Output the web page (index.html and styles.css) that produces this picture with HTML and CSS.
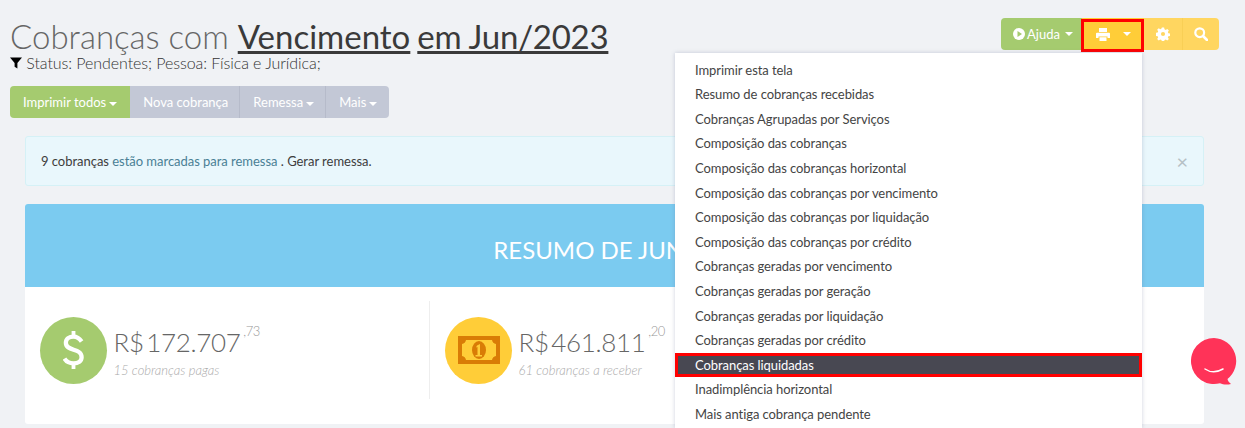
FILE: index.html
```html
<!DOCTYPE html>
<html lang="pt-BR">

<head>
    <meta charset="UTF-8">
    <title>Cobranças</title>
    <link rel="stylesheet" href="styles.css">
</head>

<body>
    <div class="page">
        <div class="top">
            <div class="heading">
                <h1>Cobranças com <u>Vencimento</u> <u>em Jun/2023</u></h1>
                <p class="filter">
                    <svg class="filter-icon" viewBox="0 0 12 12"><path d="M0 .5h12L7.4 6v5.6L4.6 9.8V6z"/></svg>
                    Status: Pendentes; Pessoa: Física e Jurídica;
                </p>
            </div>
            <div class="tools">
                <button class="btn green help">
                    <svg class="play" viewBox="0 0 12 12"><circle cx="6" cy="6" r="6" fill="#fff"/><path d="M4.5 3l4.5 3-4.5 3z" fill="#a5cb6f"/></svg>
                    Ajuda<span class="caret"></span>
                </button>
                <button class="btn yellow print">
                    <svg class="ico-print" viewBox="0 0 14 13"><path d="M3 0h8v4H3zM1 4.800h12a1 1 0 0 1 1 1V10h-2.500V8.500h-9V10H0V5.800a1 1 0 0 1 1-1zM3.500 9.300h7V13h-7z" fill="#fff"/></svg>
                    <span class="caret"></span>
                </button>
                <button class="btn pale gear">
                    <svg class="ico" viewBox="0 0 14 14"><path fill="#fff" fill-rule="evenodd" d="M5.800 0h2.400l.4 2 1.300.6 1.700-1.100 1.700 1.700-1.100 1.700.5 1.300 2 .4v2.400l-2 .4-.5 1.300 1.100 1.700-1.700 1.700-1.700-1.100-1.300.5-.4 2H5.800l-.4-2-1.300-.5-1.700 1.100-1.700-1.700 1.100-1.700-.5-1.300-2-.4V5.800l2-.4.500-1.300-1.100-1.700 1.700-1.700 1.700 1.100 1.300-.6zM7 4.800a2.200 2.200 0 1 0 0 4.400 2.200 2.200 0 0 0 0-4.400z" transform="translate(.5 .5) scale(.93)"/></svg>
                </button>
                <button class="btn pale last">
                    <svg class="ico" viewBox="0 0 14 14"><circle cx="5.700" cy="5.700" r="4.400" fill="none" stroke="#fff" stroke-width="2.200"/><path d="M9 9l4 4" stroke="#fff" stroke-width="2.600" stroke-linecap="round"/></svg>
                </button>
            </div>
        </div>

        <div class="actions">
            <button class="act act-green">Imprimir todos<span class="caret"></span></button>
            <button class="act">Nova cobrança</button>
            <button class="act">Remessa<span class="caret"></span></button>
            <button class="act">Mais<span class="caret"></span></button>
        </div>

        <div class="alert">
            <span>9 cobranças <a>estão marcadas para remessa</a> . Gerar remessa.</span>
            <span class="close">×</span>
        </div>

        <div class="card">
            <div class="card-head">RESUMO DE JUNHO</div>
            <div class="stats">
                <div class="stat">
                    <div class="circle c-green">
                        <svg class="dollar" viewBox="0 0 22 40"><path d="M11 0v7M11 33v7" stroke="#fff" stroke-width="4"/><path d="M19.500 11C17 7.500 14 6 11 6 6.500 6 3 8.500 3 12.500c0 9.500 16.500 5 16.500 15 0 4-3.500 6.500-8.500 6.500-4 0-7.500-1.500-9.500-5" fill="none" stroke="#fff" stroke-width="4.500"/></svg>
                    </div>
                    <div class="stat-text">
                        <div class="value">R$ 172.707 <sup>,73</sup></div>
                        <div class="note">15 cobranças pagas</div>
                    </div>
                </div>
                <div class="stat divided">
                    <div class="circle c-yellow">
                        <svg class="bill" viewBox="0 0 42 28"><path fill="#d97c06" fill-rule="evenodd" d="M0 0h42v28H0zM8 4a5 5 0 0 1-4 4v12a5 5 0 0 1 4 4h26a5 5 0 0 1 4-4V8a5 5 0 0 1-4-4z"/><ellipse cx="21" cy="14" rx="7" ry="9" fill="#d97c06"/><path d="M19 9.500l3-1.500v11h2v1.500h-6.500V19h2v-8l-1.500.5z" fill="#ffcd38"/></svg>
                    </div>
                    <div class="stat-text">
                        <div class="value">R$ 461.811 <sup>,20</sup></div>
                        <div class="note">61 cobranças a receber</div>
                    </div>
                </div>
            </div>
        </div>
    </div>

    <ul class="menu">
        <li>Imprimir esta tela</li>
        <li>Resumo de cobranças recebidas</li>
        <li>Cobranças Agrupadas por Serviços</li>
        <li>Composição das cobranças</li>
        <li>Composição das cobranças horizontal</li>
        <li>Composição das cobranças por vencimento</li>
        <li>Composição das cobranças por liquidação</li>
        <li>Composição das cobranças por crédito</li>
        <li>Cobranças geradas por vencimento</li>
        <li>Cobranças geradas por geração</li>
        <li>Cobranças geradas por liquidação</li>
        <li>Cobranças geradas por crédito</li>
        <li class="active">Cobranças liquidadas</li>
        <li>Inadimplência horizontal</li>
        <li>Mais antiga cobrança pendente</li>
    </ul>

    <svg class="chat" viewBox="0 0 46 47"><path fill="#ff3358" d="M23 0a23 23 0 1 0 6 45.200c3 1.500 7 1.800 11 .8-2-1.500-3-3-3.500-5A23 23 0 0 0 23 0z"/><path d="M14 31c5 3.500 12 3.500 18 0" fill="none" stroke="#fff" stroke-width="1.500" stroke-linecap="round"/></svg>
</body>

</html>
```
FILE: styles.css
```css
*,
::before,
::after {
    box-sizing: border-box;
    margin: 0;
    padding: 0;
}

html,
body {
    height: 428px;
    overflow: hidden;
}

body {
    background: #f0f2f5;
    font-family: Lato, sans-serif;
    font-size: 13px;
    color: #444;
}

button {
    font-family: inherit;
    border: 0;
    color: #fff;
}

.page {
    padding: 18px 26px 0 10px;
}

.top {
    display: flex;
    justify-content: space-between;
    align-items: flex-start;
}

h1 {
    font-size: 33px;
    font-weight: 300;
    line-height: 36px;
    color: #666;
    white-space: nowrap;
}

h1 u {
    color: #3a3a3a;
    font-weight: 400;
}

h1 u + u {
    margin-left: -2px;
    letter-spacing: -.25px;
}

.filter {
    font-size: 16px;
    font-weight: 300;
    line-height: 18px;
    letter-spacing: -.07px;
    color: #333;
}

.filter-icon {
    width: 12px;
    height: 12px;
}

.tools {
    display: flex;
}

.btn {
    height: 32px;
    font-size: 13px;
    display: flex;
    align-items: center;
    justify-content: center;
}

.green {
    width: 81px;
    padding-left: 3px;
    background: #a5cb6f;
    border-radius: 4px 0 0 4px;
    gap: 2px;
}

.play {
    width: 12px;
    height: 12px;
}

.yellow {
    position: relative;
    width: 62px;
    background: #ffcd38;
    gap: 10px;
}

/* marcacao vermelha do print */
.yellow::after {
    content: "";
    position: absolute;
    top: 1px;
    left: -1px;
    right: 0;
    bottom: -2px;
    border: 3px solid #f00;
}

.ico-print {
    width: 14px;
    height: 13px;
}

.pale {
    width: 37px;
    background: #ffd660;
}

.gear {
    width: 38px;
}

.pale + .pale {
    border-left: 1px solid #f9cf55;
}

.last {
    border-radius: 0 4px 4px 0;
}

.ico {
    width: 14px;
    height: 14px;
}

.caret {
    display: inline-block;
    margin-left: 3px;
    vertical-align: middle;
    border-top: 4px solid #fff;
    border-left: 4px solid transparent;
    border-right: 4px solid transparent;
}

.actions {
    display: flex;
    margin-top: 14px;
    height: 32px;
    width: max-content;
}

.act {
    background: #c3c8d6;
    font-size: 13px;
    padding: 0 11px 0 13px;
    border-right: 1px solid #b6bbca;
}

.act:last-child {
    padding-right: 12px;
    border-right: 0;
    border-radius: 0 4px 4px 0;
}

.act-green {
    background: #a5cb6f;
    padding-right: 13px;
    border-right: 0;
    border-radius: 4px 0 0 4px;
}

.alert {
    display: flex;
    justify-content: space-between;
    align-items: center;
    margin: 18px 15px 0;
    height: 50px;
    padding: 0 15px;
    background: #e9f7fc;
    border: 1px solid #d5f1f6;
    border-radius: 3px;
    letter-spacing: -.03px;
    color: #3d3d3d;
}

.alert a {
    color: #4a7f95;
}

.close {
    font-size: 20px;
    color: #b5c0c5;
}

.card {
    margin: 18px 15px 0;
    height: 220px;
    background: #fff;
    border-radius: 3px;
    overflow: hidden;
}

.card-head {
    height: 83px;
    line-height: 92px;
    padding-right: 14px;
    background: #7bcbf0;
    color: #fff;
    text-align: center;
    font-size: 24px;
}

.stats {
    display: flex;
    padding-top: 14px;
}

.stat {
    width: 404px;
    height: 98px;
    display: flex;
    align-items: center;
    gap: 6.500px;
    padding: 0 15px;
}

.divided {
    border-left: 1px solid #eee;
}

.circle {
    flex: none;
    width: 67px;
    height: 67px;
    border-radius: 50%;
    display: flex;
    align-items: center;
    justify-content: center;
}

.c-green {
    background: #a5cb6f;
}

.c-yellow {
    background: #ffcd38;
}

.dollar {
    width: 21px;
    height: 40px;
}

.bill {
    width: 42px;
    height: 28px;
}

.stat-text {
    padding-top: 3px;
}

.value {
    font-size: 26px;
    font-weight: 300;
    line-height: 36px;
    letter-spacing: -.35px;
    word-spacing: -4px;
    color: #666;
    white-space: nowrap;
}

.value sup {
    font-size: 13px;
    color: #999;
    vertical-align: 16px;
    line-height: 0;
}

.note {
    font-size: 13px;
    font-style: italic;
    font-weight: 300;
    line-height: 20px;
    color: #aaa;
}

/* dropdown aberto sobre o conteudo */
.menu {
    position: absolute;
    left: 675px;
    top: 53px;
    width: 467px;
    height: 375px;
    list-style: none;
    background: #fff;
    padding-top: 4.700px;
    letter-spacing: -.07px;
    box-shadow: 0 0 4px rgba(90, 100, 140, .3);
}

.menu li {
    height: 24.600px;
    line-height: 24.600px;
    padding-left: 20px;
    color: #444;
    white-space: nowrap;
}

.menu .active {
    background: #484852;
    color: #fff;
    outline: 3px solid #f00;
    outline-offset: -3px;
}

.chat {
    position: absolute;
    left: 1191px;
    top: 338px;
    width: 46px;
    height: 47px;
}
```
